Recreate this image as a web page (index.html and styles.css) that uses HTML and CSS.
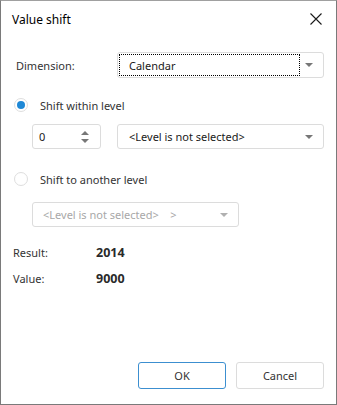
FILE: index.html
```html
<!DOCTYPE html>
<html lang="en">
<head>
    <meta charset="UTF-8">
    <title>Value shift</title>
    <link rel="stylesheet" href="styles.css">
</head>
<body>
    <div class="dialog">
        <div class="dialog-header">
            <span class="dialog-title">Value shift</span>
            <svg class="close-icon" width="12" height="12" viewBox="0 0 12 12">
                <path d="M0.5 0.5 L11.5 11.5 M11.5 0.5 L0.5 11.5" stroke="#1a1a1a" stroke-width="1.1" fill="none"/>
            </svg>
        </div>

        <div class="dialog-body">
            <div class="row dimension-row">
                <span class="field-label">Dimension:</span>
                <div class="combo combo-dimension">
                    <span class="combo-text focused">Calendar</span>
                    <span class="combo-arrow"></span>
                </div>
            </div>

            <div class="row radio-row radio-row-first">
                <span class="radio checked"></span>
                <span class="radio-label">Shift within level</span>
            </div>

            <div class="row level-row">
                <div class="spinner">
                    <span class="spinner-value">0</span>
                    <span class="spinner-arrows">
                        <span class="arrow-up"></span>
                        <span class="arrow-down"></span>
                    </span>
                </div>
                <div class="combo combo-level">
                    <span class="combo-text">&lt;Level is not selected&gt;</span>
                    <span class="combo-arrow"></span>
                </div>
            </div>

            <div class="row radio-row radio-row-second">
                <span class="radio"></span>
                <span class="radio-label">Shift to another level</span>
            </div>

            <div class="row other-row">
                <div class="combo combo-disabled">
                    <span class="combo-text">&lt;Level is not selected&gt;&nbsp;&nbsp;&nbsp;&nbsp;&gt;</span>
                    <span class="combo-arrow"></span>
                </div>
            </div>

            <div class="row info-row info-row-first">
                <span class="info-label">Result:</span>
                <span class="info-value">2014</span>
            </div>
            <div class="row info-row">
                <span class="info-label">Value:</span>
                <span class="info-value">9000</span>
            </div>
        </div>

        <div class="dialog-footer">
            <button class="btn btn-primary">OK</button>
            <button class="btn">Cancel</button>
        </div>
    </div>
</body>
</html>
```

FILE: styles.css
```css
/* Dialog window */
body {
    margin: 0;
    font-family: 'Noto Sans', 'Open Sans', sans-serif;
    font-size: 11px;
    color: #333333;
    background-color: #ffffff;
}

.dialog {
    width: 337px;
    height: 405px;
    box-sizing: border-box;
    border: 1px solid #7a7a7a;
    border-top-color: #a0a0a0;
    display: flex;
    flex-direction: column;
    background-color: #ffffff;
}

.dialog-header {
    height: 36px;
    display: flex;
    align-items: center;
    justify-content: space-between;
    padding: 0 14px 0 11px;
}

.dialog-title {
    font-size: 12px;
    color: #000000;
}

.close-icon {
    display: block;
}

/* Body rows */
.dialog-body {
    display: flex;
    flex-direction: column;
}

.row {
    display: flex;
    align-items: center;
}

.dimension-row {
    margin-top: 15px;
    height: 26px;
    padding-left: 15px;
}

.field-label {
    width: 101px;
}

.combo {
    height: 100%;
    box-sizing: border-box;
    border: 1px solid #dcdcdc;
    border-radius: 3px;
    display: flex;
    align-items: center;
    justify-content: space-between;
    padding: 1px 10px 1px 1px;
    color: #1a1a1a;
}

.combo-dimension {
    width: 207px;
}

.combo-text {
    padding-left: 8px;
    white-space: nowrap;
}

.combo-text.focused {
    align-self: stretch;
    display: flex;
    align-items: center;
    width: 170px;
    border: 1px dotted #000000;
    padding-left: 9px;
}

.combo-arrow {
    width: 0;
    height: 0;
    border-left: 4px solid transparent;
    border-right: 4px solid transparent;
    border-top: 4px solid #777777;
}

/* Radio buttons */
.radio-row {
    height: 20px;
    padding-left: 13px;
}

.radio-row-first {
    margin-top: 17px;
}

.radio-row-second {
    margin-top: 20px;
}

.radio {
    width: 14px;
    height: 14px;
    box-sizing: border-box;
    border: 1px solid #dedede;
    border-radius: 50%;
    display: flex;
    align-items: center;
    justify-content: center;
    margin-right: 12px;
}

.radio.checked::after {
    content: '';
    width: 8px;
    height: 8px;
    border-radius: 50%;
    background-color: #1e88d6;
}

/* Spinner and level combo */
.level-row {
    margin-top: 9px;
    height: 25px;
    padding-left: 31px;
    gap: 16px;
}

.spinner {
    width: 69px;
    height: 100%;
    box-sizing: border-box;
    border: 1px solid #dcdcdc;
    border-radius: 3px;
    display: flex;
    align-items: center;
    justify-content: space-between;
    padding: 0 11px 0 6px;
    color: #1a1a1a;
}

.spinner-arrows {
    display: flex;
    flex-direction: column;
    gap: 4px;
}

.arrow-up,
.arrow-down {
    width: 0;
    height: 0;
    border-left: 4px solid transparent;
    border-right: 4px solid transparent;
}

.arrow-up {
    border-bottom: 4px solid #777777;
}

.arrow-down {
    border-top: 4px solid #777777;
}

.combo-level {
    width: 207px;
}

.combo-level .combo-text {
    padding-left: 10px;
}

/* Disabled combo */
.other-row {
    margin-top: 13px;
    height: 25px;
    padding-left: 31px;
}

.combo-disabled {
    width: 207px;
    color: #a8a8a8;
}

.combo-disabled .combo-text {
    padding-left: 9px;
}

.combo-disabled .combo-arrow {
    border-top-color: #b0b0b0;
}

/* Result and value */
.info-row {
    height: 20px;
    padding-left: 12px;
    margin-top: 6px;
}

.info-row-first {
    margin-top: 15px;
}

.info-label {
    width: 83px;
}

.info-value {
    font-weight: bold;
    font-size: 12.5px;
    color: #2a2a2a;
}

/* Footer buttons */
.dialog-footer {
    margin-top: auto;
    display: flex;
    justify-content: flex-end;
    gap: 10px;
    padding: 0 12px 15px 0;
}

.btn {
    width: 88px;
    height: 27px;
    box-sizing: border-box;
    border: 1px solid #dcdcdc;
    border-radius: 3px;
    background-color: #ffffff;
    font-family: inherit;
    font-size: 11px;
    color: #333333;
    padding: 0;
}

.btn-primary {
    border-color: #3c8fd0;
}
```
